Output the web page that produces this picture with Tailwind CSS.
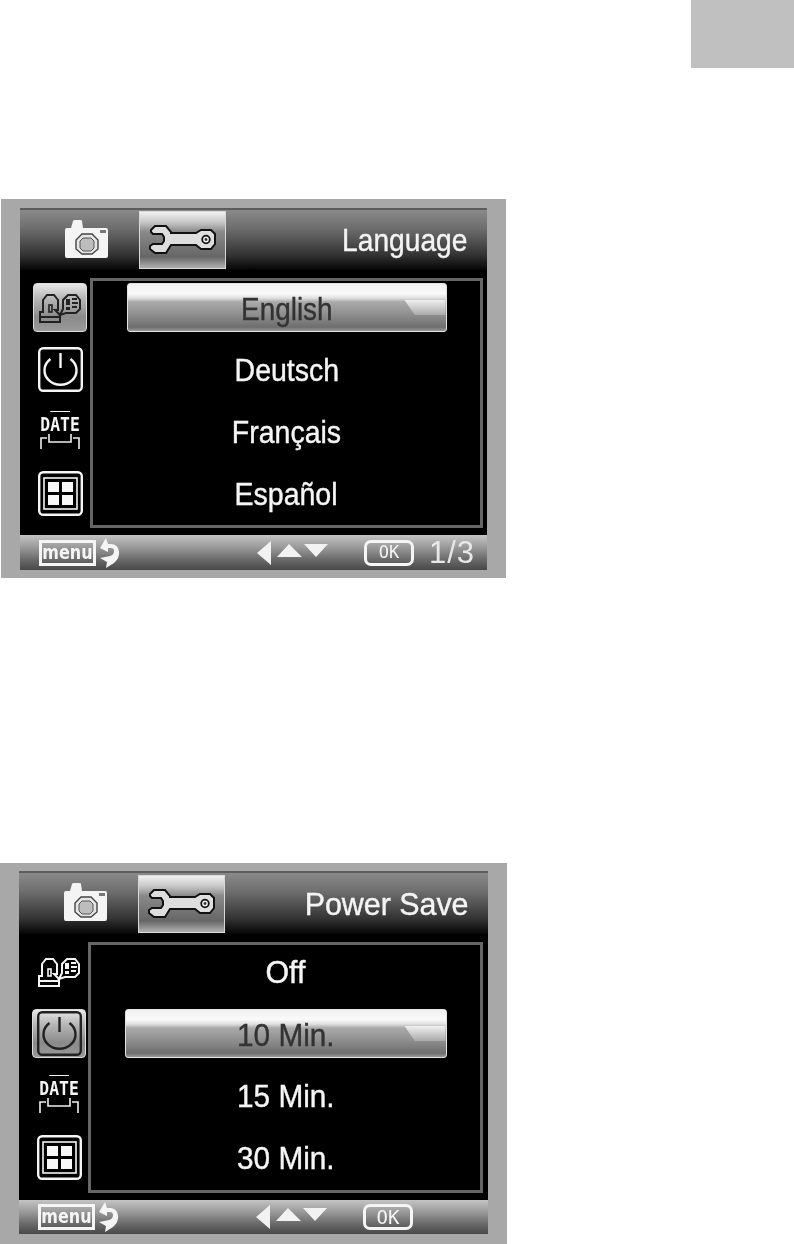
<!DOCTYPE html>
<html lang="en">
  <head>
    <meta charset="UTF-8" />
    <title>Microscope settings</title>
    <script src="https://cdn.jsdelivr.net/npm/@tailwindcss/browser@4"></script>
  </head>
  <body class="bg-white font-['Liberation_Sans',sans-serif]">
    <!-- shared icons -->
    <svg class="hidden" width="0" height="0">
      <symbol id="camera" viewBox="0 0 43 38">
        <path d="M6 8 L8 1 Q8 0 10 0 H15 Q17 0 17 1 L18 8 H41 Q43 8 43 10 V36 Q43 38 41 38 H2 Q0 38 0 36 V10 Q0 8 2 8 Z" fill="#f4f4f4" />
        <rect x="35" y="10" width="6" height="3" fill="#777" />
        <path d="M17 14 H27 L33 20 V29 L27 34 H17 L11 29 V20 Z" fill="#e6e6e6" stroke="#444" stroke-width="1.4" />
        <path d="M18 18 H26 L29 21 V28 L26 31 H18 L15 28 V21 Z" fill="#bdbdbd" stroke="#555" />
      </symbol>
      <symbol id="wrench" viewBox="0 0 68 30">
        <path d="M2 5 L6 1 H17 L22 7 V8 H47 L52 5 H62 L66 9 V19 L62 24 H52 L47 20 H22 L17 28 H6 L1 24 V21 L4 19 H13 L15 16 V12 L13 9 H4 L2 7 Z" fill="#dedede" stroke="#111" stroke-width="2" />
        <circle cx="57" cy="14.5" r="3.8" fill="#eee" stroke="#111" stroke-width="1.8" />
        <circle cx="57" cy="14.5" r="1.4" fill="#333" />
      </symbol>
      <symbol id="lang" viewBox="0 0 42 30">
        <g fill="none" stroke="currentColor" stroke-width="2">
          <path d="M1 29 V19 H4 V7 L8 2 H15 L19 7 V17 H16 L21 22 V29 Z M1 24 H21" />
          <rect x="10" y="12" width="3" height="7" stroke-width="1.6" />
          <path d="M24 16 L21 22 L27 20 H37 L41 16 V7 L37 2 H29 L24 7 Z" />
        </g>
        <path d="M27 6 H31 V12 H27 Z M27 14 H31 V17 H27 Z" fill="currentColor" />
        <path d="M33 6 H38 M33 10 H39 M33 14 H38" stroke="currentColor" stroke-width="1.8" />
      </symbol>
      <symbol id="power" viewBox="0 0 45 45">
        <rect x="1.2" y="1.2" width="42.6" height="42.6" rx="4" fill="none" stroke="currentColor" stroke-width="2.4" />
        <path d="M12.5 12 A16 14.5 0 1 0 32.5 12" fill="none" stroke="currentColor" stroke-width="2.4" />
        <path d="M22.5 6 V21" stroke="currentColor" stroke-width="2.4" />
      </symbol>
      <symbol id="brackets" viewBox="0 0 40 15">
        <path d="M1 15 V4 H7 M39 15 V4 H33 M9 0 V8 H31 V0" fill="none" stroke="#f0f0f0" stroke-width="1.6" />
      </symbol>
      <symbol id="grid" viewBox="0 0 45 45">
        <rect x="1.2" y="1.2" width="42.6" height="42.6" rx="4" fill="none" stroke="#f5f5f5" stroke-width="2.4" />
        <rect x="6" y="7" width="33" height="31" fill="none" stroke="#f5f5f5" stroke-width="1.6" />
        <path d="M10 11 H21 V21 H10 Z M24 11 H35 V21 H24 Z M10 24 H21 V34 H10 Z M24 24 H35 V34 H24 Z" fill="#f8f8f8" />
      </symbol>
      <symbol id="back" viewBox="0 0 20 30">
        <path d="M6 0 L0 10 L8 14 V10 H11 Q14 10 14 13 Q14 17 10 18 L0 20 L7 24 L6 30 L14 25 Q20 20 19 13 Q18 7 12 6 H8 Z" fill="#f5f5f5" />
      </symbol>
      <symbol id="arrows" viewBox="0 0 72 24">
        <path d="M14 0 V24 L0 12 Z M20 16 L32 3 L45 16 Z M47 3 H71 L59 16 Z" fill="#f2f2f2" />
      </symbol>
    </svg>

    <!-- grey tab in the page corner -->
    <div class="ml-auto w-[103px] h-[68px] bg-[#c0c0c0]"></div>

    <!-- Language screen -->
    <div class="mt-[131px] ml-[1px] w-[505px] h-[379px] bg-[#a8a8a8] pt-[9px] pl-[19px] blur-[0.5px]">
      <div class="w-[467px]">
        <div class="flex items-center h-[62px] border-t-2 border-[#5c5c5c] bg-[linear-gradient(#8a8a8a,#6e6e6e_30%,#333_75%,#050505)]">
          <svg class="ml-[45px] mb-[3px] w-[43px] h-[38px]"><use href="#camera" /></svg>
          <div class="ml-[31px] w-[87px] h-[58px] flex items-center justify-center border border-[#d8d8d8] bg-[linear-gradient(#f0f0f0,#c8c8c8_18%,#8a8a8a_35%,#666_80%,#b0b0b0)]">
            <svg class="w-[68px] h-[30px]"><use href="#wrench" /></svg>
          </div>
          <span class="ml-auto mr-[20px] text-[32px] leading-none text-[#f4f4f4] origin-right scale-x-[.88] whitespace-nowrap [-webkit-text-stroke:0.4px_currentColor]">Language</span>
        </div>
        <div class="flex h-[265px] bg-black">
          <div class="w-[70px] pl-[13px] pt-[13px] flex flex-col gap-[13px]">
            <div class="w-[54px] h-[49px] flex items-center justify-center rounded-[4px] border border-[#ddd] text-[#222] bg-[linear-gradient(#e8e8e8,#b8b8b8_30%,#8a8a8a_70%,#9a9a9a)]">
              <svg class="w-[42px] h-[30px]"><use href="#lang" /></svg>
            </div>
            <div class="w-[54px] h-[49px] flex items-center justify-center text-[#f5f5f5]">
              <svg class="w-[45px] h-[45px]"><use href="#power" /></svg>
            </div>
            <div class="w-[54px] h-[49px] flex flex-col items-center justify-center text-[#f5f5f5]">
              <span class="text-[20px] leading-[19px] font-bold font-['DejaVu_Sans_Mono',monospace] scale-x-[.82]">D<span class="overline decoration-1">AT</span>E</span>
              <svg class="w-[40px] h-[15px]"><use href="#brackets" /></svg>
            </div>
            <div class="w-[54px] h-[49px] flex items-center justify-center">
              <svg class="w-[45px] h-[45px]"><use href="#grid" /></svg>
            </div>
          </div>
          <div class="mt-[8px] w-[393px] h-[250px] border-[3px] border-[#666] pt-[2px] flex flex-col gap-[13px] items-center text-[#f5f5f5] text-[31px] [-webkit-text-stroke:0.4px_currentColor]">
            <div class="relative w-[320px] h-[49px] flex items-center justify-center rounded-[3px] border border-[#e4e4e4] text-[#333] bg-[linear-gradient(#f0f0f0,#fafafa_20%,#e0e0e0_30%,#aaa_38%,#8e8e8e_65%,#6e6e6e_92%,#999)]">
              <div class="absolute right-0 top-[16px] w-[41px] h-[15px] bg-[linear-gradient(#f0f0f0,#aaa)] [clip-path:polygon(0_0,100%_0,100%_100%,25%_100%)]"></div>
              <span class="relative translate-y-[2px] leading-none scale-x-[.9]">English</span>
            </div>
            <div class="h-[49px] flex items-center translate-y-[2px] scale-x-[.92]">Deutsch</div>
            <div class="h-[49px] flex items-center translate-y-[2px] scale-x-[.92]">Français</div>
            <div class="h-[49px] flex items-center translate-y-[2px] scale-x-[.92]">Español</div>
          </div>
        </div>
        <div class="flex items-center h-[35px] bg-[linear-gradient(#c4c4c4,#9a9a9a_35%,#6a6a6a_70%,#484848)] text-[#f5f5f5]">
          <div class="ml-[19px] w-[57px] h-[26px] flex items-center justify-center border-[3px] border-[#f5f5f5] text-[20px] leading-none font-bold font-['DejaVu_Sans',sans-serif]"><span class="scale-x-[.8] -translate-y-[1px]">menu</span></div>
          <svg class="ml-[4px] w-[20px] h-[30px]"><use href="#back" /></svg>
          <svg class="ml-[137px] w-[72px] h-[24px]"><use href="#arrows" /></svg>
          <div class="ml-[35px] w-[50px] h-[26px] flex items-center justify-center rounded-[7px] border-[3px] border-[#f5f5f5] text-[17px] leading-none font-['DejaVu_Sans_Mono',monospace]">OK</div>
          <span class="ml-[15px] text-[31px] leading-none tracking-[1px] text-[#e8e8e8]">1/3</span>
        </div>
      </div>
    </div>

    <!-- Power Save screen -->
    <div class="mt-[285px] w-[507px] h-[381px] bg-[#a8a8a8] pt-[8px] pl-[19px] blur-[0.5px]">
      <div class="w-[469px]">
        <div class="flex items-center h-[63px] border-t-2 border-[#5c5c5c] bg-[linear-gradient(#8a8a8a,#6e6e6e_30%,#333_75%,#050505)]">
          <svg class="ml-[45px] mb-[3px] w-[43px] h-[38px]"><use href="#camera" /></svg>
          <div class="ml-[31px] w-[87px] h-[58px] flex items-center justify-center border border-[#d8d8d8] bg-[linear-gradient(#f0f0f0,#c8c8c8_18%,#8a8a8a_35%,#666_80%,#b0b0b0)]">
            <svg class="w-[68px] h-[30px]"><use href="#wrench" /></svg>
          </div>
          <span class="ml-auto mr-[19px] text-[32px] leading-none text-[#f4f4f4] origin-right scale-x-[.95] whitespace-nowrap [-webkit-text-stroke:0.4px_currentColor]">Power Save</span>
        </div>
        <div class="flex h-[266px] bg-black">
          <div class="w-[69px] pl-[13px] pt-[13px] flex flex-col gap-[13px]">
            <div class="w-[54px] h-[49px] flex items-center justify-center text-[#f5f5f5]">
              <svg class="w-[42px] h-[30px]"><use href="#lang" /></svg>
            </div>
            <div class="w-[54px] h-[49px] flex items-center justify-center rounded-[4px] border border-[#ddd] text-[#222] bg-[linear-gradient(#e8e8e8,#b8b8b8_30%,#8a8a8a_70%,#9a9a9a)]">
              <svg class="w-[45px] h-[45px]"><use href="#power" /></svg>
            </div>
            <div class="w-[54px] h-[49px] flex flex-col items-center justify-center text-[#f5f5f5]">
              <span class="text-[20px] leading-[19px] font-bold font-['DejaVu_Sans_Mono',monospace] scale-x-[.82]">D<span class="overline decoration-1">AT</span>E</span>
              <svg class="w-[40px] h-[15px]"><use href="#brackets" /></svg>
            </div>
            <div class="w-[54px] h-[49px] flex items-center justify-center">
              <svg class="w-[45px] h-[45px]"><use href="#grid" /></svg>
            </div>
          </div>
          <div class="mt-[8px] w-[395px] h-[251px] border-[3px] border-[#666] pt-[2px] flex flex-col gap-[13px] items-center text-[#f5f5f5] text-[31px] [-webkit-text-stroke:0.4px_currentColor]">
            <div class="h-[49px] flex items-center translate-y-[2px] scale-x-[.98]">Off</div>
            <div class="relative w-[322px] h-[49px] flex items-center justify-center rounded-[3px] border border-[#e4e4e4] text-[#333] bg-[linear-gradient(#f0f0f0,#fafafa_20%,#e0e0e0_30%,#aaa_38%,#8e8e8e_65%,#6e6e6e_92%,#999)]">
              <div class="absolute right-0 top-[16px] w-[41px] h-[15px] bg-[linear-gradient(#f0f0f0,#aaa)] [clip-path:polygon(0_0,100%_0,100%_100%,25%_100%)]"></div>
              <span class="relative translate-y-[2px] leading-none scale-x-[.96]">10 Min.</span>
            </div>
            <div class="h-[49px] flex items-center translate-y-[2px] scale-x-[.96]">15 Min.</div>
            <div class="h-[49px] flex items-center translate-y-[2px] scale-x-[.96]">30 Min.</div>
          </div>
        </div>
        <div class="flex items-center h-[34px] bg-[linear-gradient(#c4c4c4,#9a9a9a_35%,#6a6a6a_70%,#484848)] text-[#f5f5f5]">
          <div class="ml-[19px] w-[57px] h-[26px] flex items-center justify-center border-[3px] border-[#f5f5f5] text-[20px] leading-none font-bold font-['DejaVu_Sans',sans-serif]"><span class="scale-x-[.8] -translate-y-[1px]">menu</span></div>
          <svg class="ml-[4px] w-[20px] h-[30px]"><use href="#back" /></svg>
          <svg class="ml-[137px] w-[72px] h-[24px]"><use href="#arrows" /></svg>
          <div class="ml-[35px] w-[50px] h-[26px] flex items-center justify-center rounded-[7px] border-[3px] border-[#f5f5f5] text-[19px] leading-none font-['DejaVu_Sans_Mono',monospace]">OK</div>
        </div>
      </div>
    </div>
  </body>
</html>
